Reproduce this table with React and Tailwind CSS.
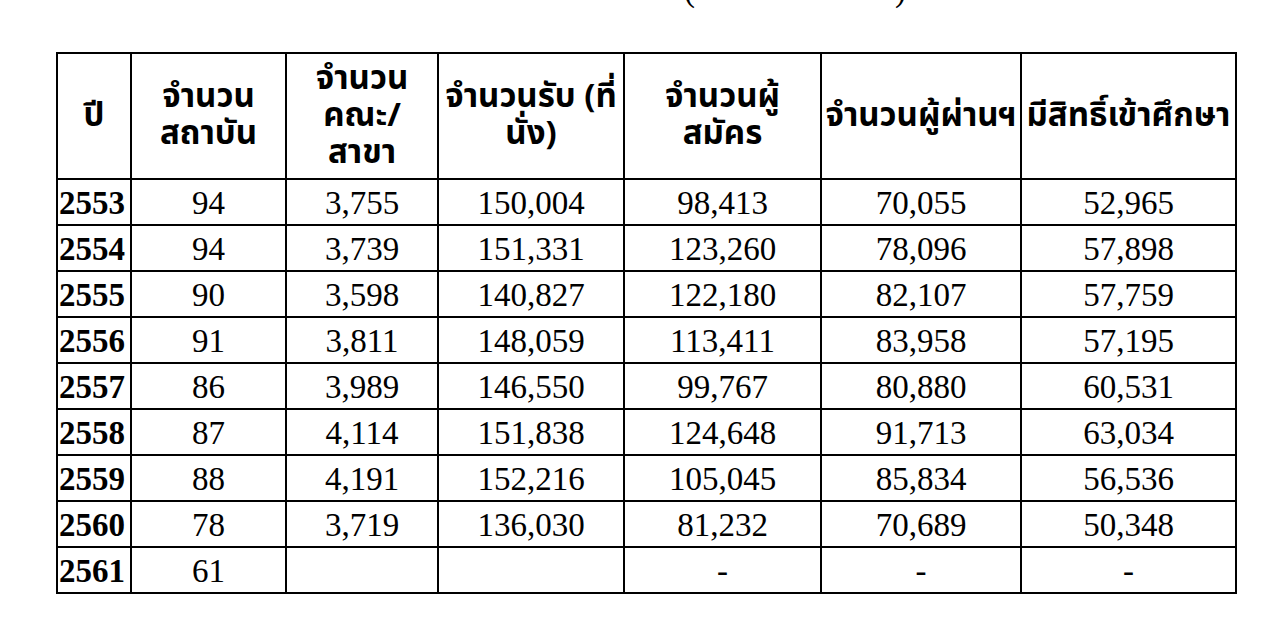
const rows = [
  ["2553", "94", "3,755", "150,004", "98,413", "70,055", "52,965"],
  ["2554", "94", "3,739", "151,331", "123,260", "78,096", "57,898"],
  ["2555", "90", "3,598", "140,827", "122,180", "82,107", "57,759"],
  ["2556", "91", "3,811", "148,059", "113,411", "83,958", "57,195"],
  ["2557", "86", "3,989", "146,550", "99,767", "80,880", "60,531"],
  ["2558", "87", "4,114", "151,838", "124,648", "91,713", "63,034"],
  ["2559", "88", "4,191", "152,216", "105,045", "85,834", "56,536"],
  ["2560", "78", "3,719", "136,030", "81,232", "70,689", "50,348"],
  ["2561", "61", "", "", "-", "-", "-"],
];

const headers = [
  ["ปี"],
  ["จำนวน", "สถาบัน"],
  ["จำนวน", "คณะ/", "สาขา"],
  ["จำนวนรับ (ที่", "นั่ง)"],
  ["จำนวนผู้", "สมัคร"],
  ["จำนวนผู้ผ่านฯ"],
  ["มีสิทธิ์เข้าศึกษา"],
];

const thai = { fontFamily: '"Noto Sans Thai", Tahoma, "Noto Sans", sans-serif' };

export default function App() {
  return (
    <div className="h-[640px] w-[1280px] overflow-hidden bg-white text-black">
      <div className="h-[52px] overflow-hidden">
        <div
          className="-mt-[30px] flex pl-[684px] text-[33px] leading-[40px]"
          style={{ fontFamily: '"Liberation Serif", serif' }}
        >
          <span>(</span>
          <span className="ml-[200px]">)</span>
        </div>
      </div>

      <div className="ml-[56px] grid w-fit grid-cols-[72px_153px_150px_184px_195px_198px_213px] grid-rows-[124px_repeat(9,44px)] gap-[2px] border-2 border-black bg-black">
        {headers.map((lines, i) => (
          <div
            key={i}
            className="flex flex-col items-center justify-center whitespace-nowrap bg-white text-[33px] font-bold leading-[37px]"
            style={thai}
          >
            {lines.map((l) => (
              <span key={l}>{l}</span>
            ))}
          </div>
        ))}

        {rows.map((row) =>
          row.map((cell, j) => (
            <div
              key={row[0] + j}
              className={
                j === 0
                  ? "flex items-center bg-white pl-[1px] pt-[3px] text-[33px] font-bold"
                  : "flex items-center justify-center bg-white pt-[3px] text-[33px]"
              }
              style={{ fontFamily: '"Liberation Serif", serif' }}
            >
              {cell}
            </div>
          ))
        )}
      </div>
    </div>
  );
}
